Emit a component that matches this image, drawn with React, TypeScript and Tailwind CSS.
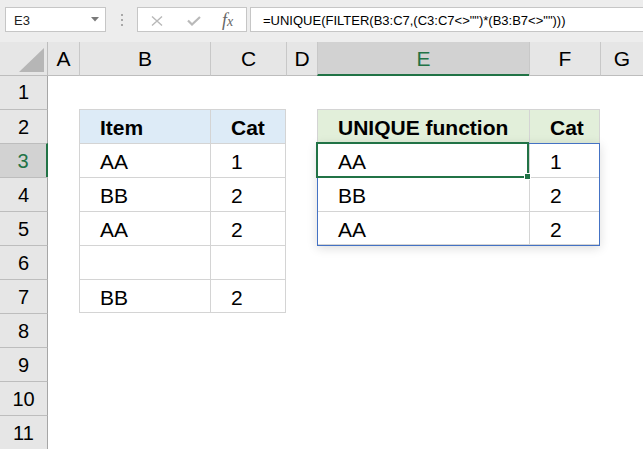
import React from "react";

const COLS = ["A", "B", "C", "D", "E", "F", "G"];
const ROWS = [1, 2, 3, 4, 5, 6, 7, 8, 9, 10, 11];

const VALUES: Record<string, string> = {
  B2: "Item", C2: "Cat",
  B3: "AA", C3: "1",
  B4: "BB", C4: "2",
  B5: "AA", C5: "2",
  B7: "BB", C7: "2",
  E2: "UNIQUE function", F2: "Cat",
  E3: "AA", F3: "1",
  E4: "BB", F4: "2",
  E5: "AA", F5: "2",
};

const FORMULA = '=UNIQUE(FILTER(B3:C7,(C3:C7<>"")*(B3:B7<>"")))';

// which table a cell belongs to decides borders / header fill
function cellClass(c: string, r: number) {
  const t1 = (c === "B" || c === "C") && r >= 2 && r <= 7;
  const t2 = (c === "E" || c === "F") && r >= 2 && r <= 5;
  if (!t1 && !t2) return "";
  const cls = ["border-l border-t border-[#d4d4d4]"];
  if (c === "C" || c === "F") cls.push("border-r");
  if ((t1 && r === 7) || (t2 && r === 5)) cls.push("border-b");
  if (r === 2) cls.push("font-bold", t1 ? "bg-[#ddebf7]" : "bg-[#e2efda]");
  return cls.join(" ");
}

function FormulaBar() {
  return (
    <div className="h-[42px] bg-[#ededed] flex items-start pt-[7px] pl-[5px]">
      {/* name box */}
      <div className="w-[101px] h-[25px] border border-[#c6c6c6] bg-white flex items-center justify-between pl-[8px] pr-[6px]">
        <span className="text-[13px] text-[#222] pt-[2px]">E3</span>
        <svg width="8" height="5" viewBox="0 0 8 5">
          <polygon points="0,0 8,0 4,4.5" fill="#7a7a7a" />
        </svg>
      </div>
      <div className="w-[31px] h-[25px] flex flex-col items-center justify-center gap-[3px]">
        <div className="w-[2px] h-[2px] bg-[#a8a8a8]" />
        <div className="w-[2px] h-[2px] bg-[#a8a8a8]" />
        <div className="w-[2px] h-[2px] bg-[#a8a8a8]" />
      </div>
      {/* cancel / enter / fx */}
      <div className="w-[110px] h-[25px] border border-[#c6c6c6] bg-white flex items-center pl-[13px]">
        <svg width="12" height="10" viewBox="0 0 12 10" className="mt-[2px]">
          <path d="M1 0.5 L11 9.5 M11 0.5 L1 9.5" stroke="#b9b9b9" strokeWidth="1.4" />
        </svg>
        <svg width="14" height="10" viewBox="0 0 14 10" className="ml-[24px] mt-[2px]">
          <path d="M1 4.5 L5 8.5 L13 1" stroke="#b9b9b9" strokeWidth="2.2" fill="none" />
        </svg>
        <span className="ml-[21px] text-[18px] italic text-[#666] font-['Liberation_Serif',serif] leading-none">
          f<span className="text-[14px]">x</span>
        </span>
      </div>
      <div className="flex-1 h-[25px] ml-[3px] border border-r-0 border-[#c6c6c6] bg-white pl-[12px] pt-[4px] text-[13px] leading-[18px] text-black whitespace-nowrap">
        {FORMULA}
      </div>
    </div>
  );
}

export default function App() {
  return (
    <div className="w-[643px] h-[449px] overflow-hidden bg-white font-['Liberation_Sans',Arial,sans-serif]">
      <FormulaBar />
      <div className="grid grid-cols-[48px_31px_131px_76px_31px_212px_71px_1fr] grid-rows-[34px_33px_repeat(10,34px)]">
        {/* column headers */}
        <div className="bg-[#e6e6e6] border-r border-b border-[#bdbdbd] flex items-end justify-end pr-[3px] pb-[3px]">
          <svg width="25" height="24" viewBox="0 0 25 24">
            <polygon points="25,0 25,24 0,24" fill="#b6b6b6" />
          </svg>
        </div>
        {COLS.map((c) =>
          c === "E" ? (
            <div key={c} className="bg-[#d2d2d2] border-l border-[#c8c8c8] border-b-2 border-b-[#217346] text-center text-[21px] leading-[34px] text-[#217346]">
              {c}
            </div>
          ) : (
            <div key={c} className={`bg-[#e6e6e6] border-b border-[#bdbdbd] text-center text-[21px] leading-[34px] text-black ${c === "A" ? "" : "border-l border-l-[#c8c8c8]"}`}>
              {c}
            </div>
          )
        )}

        {ROWS.map((r) => (
          <React.Fragment key={r}>
            {r === 3 ? (
              <div className="bg-[#d2d2d2] border-t border-[#bdbdbd] border-r-2 border-r-[#217346] text-center text-[20px] leading-[34px] text-[#217346]">
                {r}
              </div>
            ) : (
              <div className={`bg-[#e6e6e6] border-r border-r-[#a6a6a6] text-center text-[20px] text-black ${r === 1 ? "leading-[33px]" : "border-t border-t-[#bdbdbd] leading-[34px]"}`}>
                {r}
              </div>
            )}
            {COLS.map((c) => {
              const key = `${c}${r}`;
              return (
                <div key={key} className={`relative text-[21px] text-black whitespace-nowrap pl-5 pt-[2px] leading-[32px] ${cellClass(c, r)}`}>
                  {VALUES[key] ?? ""}
                  {key === "E3" && (
                    <>
                      {/* spill range outline */}
                      <div className="absolute -top-px -left-px w-[283px] h-[103px] border border-[#4472c4] shadow-[0_2px_10px_rgba(0,0,0,0.14)] pointer-events-none z-10" />
                      {/* active cell */}
                      <div className="absolute -top-[2px] -left-[2px] w-[213px] h-[36px] border-2 border-[#217346] pointer-events-none z-20">
                        <div className="absolute -right-[4px] -bottom-[4px] w-[7px] h-[7px] bg-[#217346] border border-white" />
                      </div>
                    </>
                  )}
                </div>
              );
            })}
          </React.Fragment>
        ))}
      </div>
    </div>
  );
}
